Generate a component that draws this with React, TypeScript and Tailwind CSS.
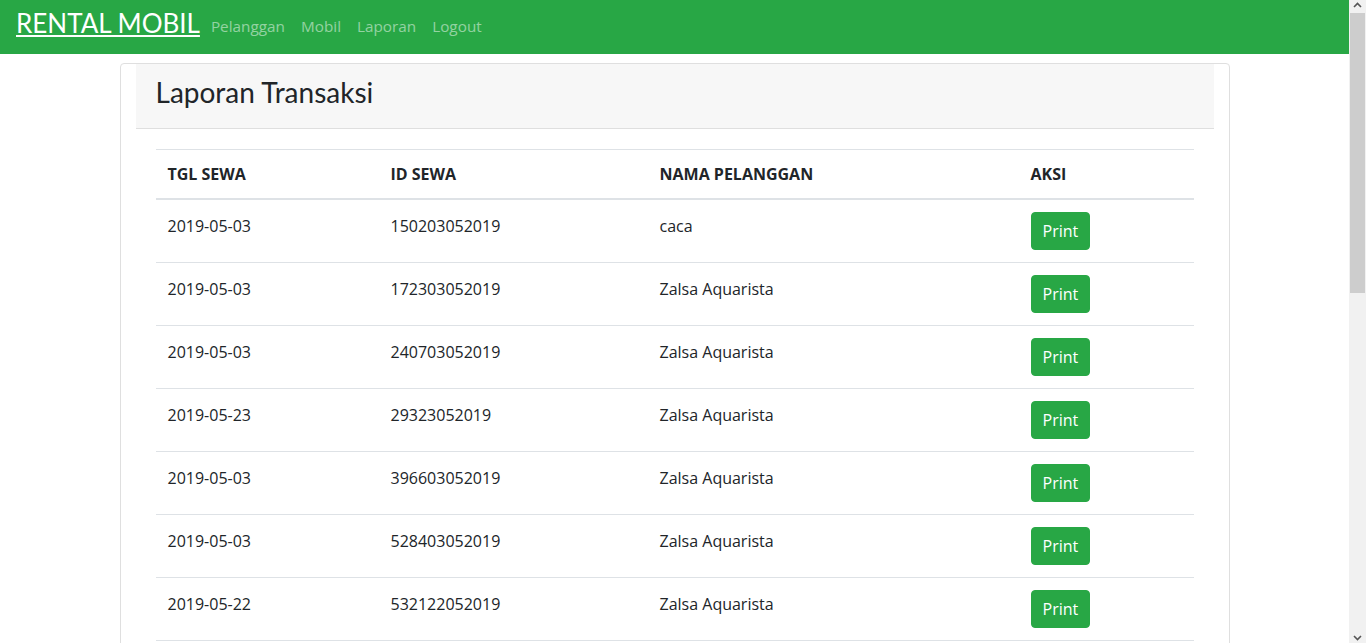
const rows = [
  { tgl: "2019-05-03", id: "150203052019", nama: "caca" },
  { tgl: "2019-05-03", id: "172303052019", nama: "Zalsa Aquarista" },
  { tgl: "2019-05-03", id: "240703052019", nama: "Zalsa Aquarista" },
  { tgl: "2019-05-23", id: "29323052019", nama: "Zalsa Aquarista" },
  { tgl: "2019-05-03", id: "396603052019", nama: "Zalsa Aquarista" },
  { tgl: "2019-05-03", id: "528403052019", nama: "Zalsa Aquarista" },
  { tgl: "2019-05-22", id: "532122052019", nama: "Zalsa Aquarista" },
  { tgl: "2019-05-03", id: "610403052019", nama: "Zalsa Aquarista" },
];

function Navbar() {
  return (
    <nav className="h-[54px] bg-[#28a745] flex items-center px-4">
      <a
        href="#"
        className="text-white underline text-[26px] leading-none mr-[3px] pb-2 font-['Lato',sans-serif]"
      >
        RENTAL MOBIL
      </a>
      <div className="flex items-center pb-0.5">
        {["Pelanggan", "Mobil", "Laporan", "Logout"].map((l) => (
          <a key={l} href="#" className="px-2 text-[15.3px] text-white/50">
            {l}
          </a>
        ))}
      </div>
    </nav>
  );
}

function Scrollbar() {
  return (
    <div className="w-[17px] h-full bg-[#f1f1f1] flex flex-col items-center">
      <div className="h-[13px] w-full flex items-start justify-center pt-[2px]">
        <svg width="9" height="6" viewBox="0 0 9 6">
          <path d="M1 5 L4.5 1.5 L8 5" stroke="#555" strokeWidth="1.6" fill="none" />
        </svg>
      </div>
      <div className="h-[280px] w-[15px] bg-[#cdcdcd]" />
      <div className="flex-1" />
      <div className="h-[13px] w-full flex items-end justify-center pb-[2px]">
        <svg width="9" height="6" viewBox="0 0 9 6">
          <path d="M1 1 L4.5 4.5 L8 1" stroke="#555" strokeWidth="1.6" fill="none" />
        </svg>
      </div>
    </div>
  );
}

export default function App() {
  return (
    <div className="h-[643px] w-[1366px] flex overflow-hidden bg-white font-['Open_Sans',sans-serif] text-[#212529]">
      <main className="flex-1 h-full overflow-hidden">
        <Navbar />
        <div className="w-[1140px] mx-auto px-[15px] mt-[9px]">
          <div className="border border-[#dfdfdf] rounded px-[15px]">
            <div className="h-[65px] bg-[#f7f7f7] border-b border-[#dfdfdf] flex items-center px-5 pb-[7px]">
              <h3 className="text-[28px] font-['Lato',sans-serif] leading-tight">Laporan Transaksi</h3>
            </div>
            <div className="px-5 pt-5">
              <table className="w-full table-fixed border-collapse text-base leading-6">
                <colgroup>
                  <col className="w-[223px]" />
                  <col className="w-[269px]" />
                  <col className="w-[371px]" />
                  <col />
                </colgroup>
                <thead>
                  <tr>
                    {["TGL SEWA", "ID SEWA", "NAMA PELANGGAN", "AKSI"].map((h) => (
                      <th
                        key={h}
                        className="text-left font-bold px-3 py-3 border-t border-b-2 border-[#dee2e6]"
                      >
                        {h}
                      </th>
                    ))}
                  </tr>
                </thead>
                <tbody>
                  {rows.map((r, i) => (
                    <tr key={i}>
                      <td className="px-3 py-3 align-top border-t border-[#dee2e6] pt-[14px]">{r.tgl}</td>
                      <td className="px-3 py-3 align-top border-t border-[#dee2e6] pt-[14px]">{r.id}</td>
                      <td className="px-3 py-3 align-top border-t border-[#dee2e6] pt-[14px]">{r.nama}</td>
                      <td className="px-3 py-3 align-top border-t border-[#dee2e6]">
                        <button className="bg-[#28a745] border border-[#28a745] text-white rounded px-[11px] py-1.5 leading-6 text-base">
                          Print
                        </button>
                      </td>
                    </tr>
                  ))}
                </tbody>
              </table>
            </div>
          </div>
        </div>
      </main>
      <Scrollbar />
    </div>
  );
}
